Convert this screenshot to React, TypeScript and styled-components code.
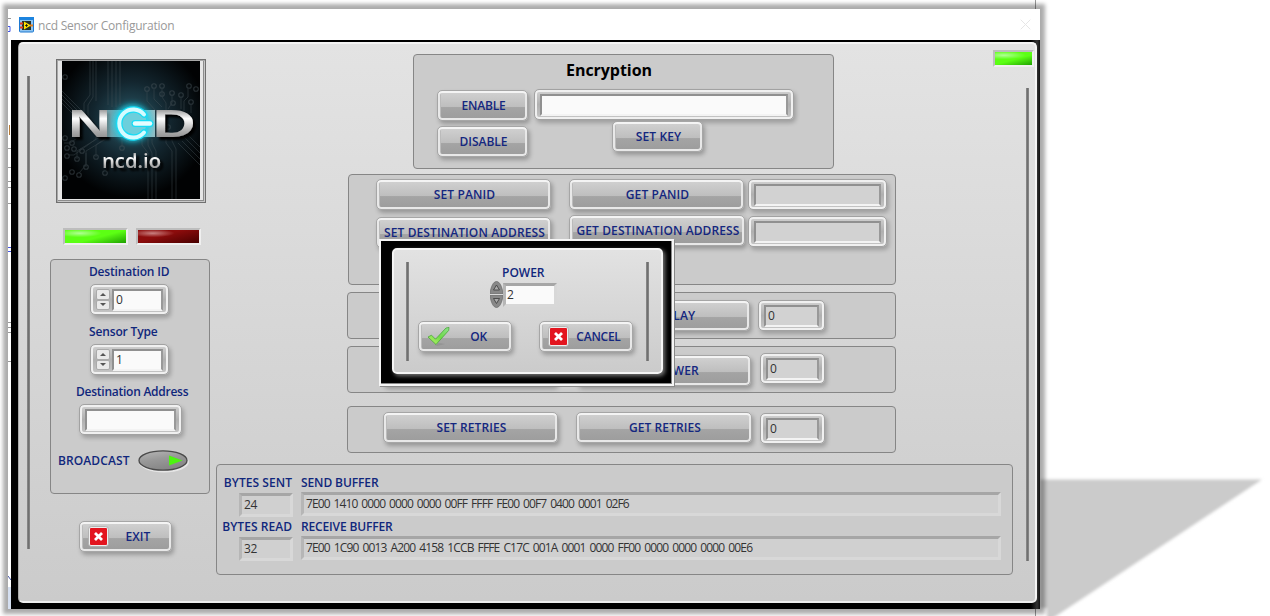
import React from "react";
import styled, { createGlobalStyle, css } from "styled-components";

const Global = createGlobalStyle`
  * { box-sizing: border-box; }
  html, body { margin: 0; padding: 0; background: #fff; overflow: hidden; }
  body { font-family: "Open Sans", "Noto Sans", sans-serif; font-size: 12px; }
`;

const Stage = styled.div`
  position: relative;
  width: 1270px;
  height: 616px;
  padding: 9px 0 0 8px;
  overflow: hidden;
  background: #fff;
`;

const CastShadow = styled.svg`
  position: absolute;
  left: 1030px;
  top: 0;
`;

const EdgeLines = styled.svg`
  position: absolute;
  left: 0;
  top: 0;
`;

const Shell = styled.div`
  position: relative;
  display: flex;
  width: 1032px;
  height: 600px;
  background: #fff;
  box-shadow: 0 0 4px 5px rgba(0, 0, 0, 0.33);
`;

const Window = styled.div`
  display: flex;
  flex-direction: column;
  width: 1029px;
`;

const TitleBar = styled.header`
  display: flex;
  align-items: center;
  height: 31px;
  padding: 0 9px 0 8px;
  background: #fff;
  color: #999;
  font-size: 12px;
`;

const Title = styled.span`
  flex: 1;
  margin: 2px 0 0 4px;
  letter-spacing: -0.22px;
`;

const Bezel = styled.main`
  height: 569px;
  padding: 2px 2px 6px 7px;
  background: linear-gradient(90deg, #000 0 1020px, #333 1026px, #111 1029px);
`;

const Face = styled.div`
  display: flex;
  width: 1019px;
  height: 561px;
  border: 2px solid #f4f4f4;
  border-left-color: #aaa;
  border-bottom-color: #eee;
  border-left-width: 1px;
  border-radius: 5px;
  background: linear-gradient(#e3e3e3, #cbcbcb);
`;

const Rail = styled.div<{ $h: number; $top?: number }>`
  flex: none;
  width: 3px;
  height: ${(p) => p.$h}px;
  margin-top: ${(p) => p.$top ?? 0}px;
  background: linear-gradient(90deg, #8f8f8f, #707070 50%, #8b8b8b);
`;

const SideColumn = styled.aside`
  display: flex;
  flex-direction: column;
  width: 160px;
  margin: 15px 0 0 20px;
`;

const LogoFrame = styled.div`
  width: 150px;
  height: 144px;
  margin-left: 6px;
  padding: 1px 5px 3px;
  border: 1px solid #707070;
  background: #e6e6e6;
  box-shadow: inset 1px 1px 0 #a8a8a8, inset -1px -1px 0 #c8c8c8, inset -2px -2px 0 #8c8c8c;
  svg { display: block; }
`;

const LedPair = styled.div`
  display: flex;
  gap: 8px;
  margin: 25px 0 0 13px;
`;

const Led = styled.div<{ $on: boolean; $w: number }>`
  width: ${(p) => p.$w}px;
  height: 17px;
  border: 2px solid;
  border-color: #bdbdbd #efefef #efefef #bdbdbd;
  background: ${(p) =>
    p.$on
      ? "radial-gradient(ellipse 22px 4px at 24% 25%, #b0ff95, transparent), linear-gradient(165deg, #5cff14 55%, #1ea000)"
      : "radial-gradient(ellipse 22px 4px at 24% 25%, #c98080, transparent), linear-gradient(165deg, #8c0c0c 40%, #480000)"};
`;

const group = css`
  border: 1px solid #868686;
  border-radius: 4px;
  background: #cbcbcb;
`;

const SettingsGroup = styled.section`
  ${group}
  display: flex;
  flex-direction: column;
  height: 235px;
  margin-top: 14px;
  padding-top: 4px;
`;

const Caption = styled.div<{ $left?: number; $top?: number; $ls?: number }>`
  height: 16px;
  margin-left: ${(p) => p.$left ?? 0}px;
  margin-top: ${(p) => p.$top ?? 0}px;
  color: #10277c;
  font-size: 12px;
  font-weight: 600;
  line-height: 16px;
  white-space: nowrap;
  letter-spacing: ${(p) => p.$ls ?? -0.25}px;
`;

const Framed = styled.div<{ $w: number; $left?: number; $top?: number }>`
  display: flex;
  flex: none;
  width: ${(p) => p.$w}px;
  height: 31px;
  margin-left: ${(p) => p.$left ?? 0}px;
  margin-top: ${(p) => p.$top ?? 0}px;
  padding: 4px 5px 3px;
  border: 1px solid #a2a2a2;
  border-radius: 5px;
  background: linear-gradient(#d2d2d2, #b0b0b0 50%, #c6c6c6);
  box-shadow: inset 0 0 0 2px #f0f0f0, 2px 3px 4px rgba(0, 0, 0, 0.22);
`;

const Well = styled.div<{ $readOnly?: boolean }>`
  flex: 1;
  border: 2px solid;
  border-color: #909090 #999 #f3f3f3 #909090;
  padding-left: 2px;
  background: ${(p) => (p.$readOnly ? "#d2d2d2" : "#fafafa")};
  color: #333;
  font-size: 12px;
  line-height: 17px;
`;

const Arrows = styled.div`
  display: flex;
  flex-direction: column;
  width: 14px;
  height: 21px;
  margin: 0 2px 0 0;
`;

const Arrow = styled.span<{ $down?: boolean }>`
  display: flex;
  flex: 1;
  align-items: center;
  justify-content: center;
  border: 1px solid #aaa;
  border-radius: 2px;
  background: #e9e9e9;
  &::after {
    content: "";
    border: 3px solid transparent;
    ${(p) => (p.$down ? "border-top-color: #555; border-bottom: 0;" : "border-bottom-color: #555; border-top: 0;")}
  }
`;

const BroadcastRow = styled.div`
  display: flex;
  align-items: center;
  margin: 14px 0 0 7px;
  gap: 8px;
`;

const Button = styled.button<{ $w: number; $ls?: number; $top?: number; $icon?: boolean }>`
  display: flex;
  flex: none;
  align-items: center;
  justify-content: center;
  width: ${(p) => p.$w}px;
  height: 31px;
  margin: ${(p) => p.$top ?? 0}px 0 0;
  padding: 0 0 1px 2px;
  border: 1px solid #a6a6a6;
  border-radius: 5px;
  background: linear-gradient(#d2d2d2, #bebebe 55%, #a4a4a4 57%, #9c9c9c);
  box-shadow: inset 0 2px 0 #f4f4f4, inset 0 0 0 2px #e8e8e8, inset 3px 0 0 #bbb, 2px 3px 4px rgba(0, 0, 0, 0.25);
  color: #14277f;
  font-family: inherit;
  font-size: 12px;
  font-weight: 600;
  letter-spacing: ${(p) => p.$ls ?? 0.1}px;
  white-space: nowrap;
  ${(p) =>
    p.$icon &&
    css`
      justify-content: flex-start;
      svg { flex: none; margin-left: 6px; }
      span { flex: 1; text-align: center; padding-right: 4px; }
    `}
`;

const ExitSlot = styled.div`
  margin: 27px 0 0 29px;
`;

const CenterColumn = styled.div`
  display: flex;
  flex-direction: column;
  width: 796px;
  margin: 10px 0 0 7px;
`;

const EncryptionGroup = styled.section`
  ${group}
  width: 421px;
  height: 115px;
  margin-left: 196px;
`;

const GroupTitle = styled.h1`
  height: 22px;
  margin: 4px 29px 8px 0;
  color: #000;
  font-size: 16px;
  font-weight: 700;
  line-height: 22px;
  text-align: center;
  letter-spacing: -0.05px;
`;

const EncryptionBody = styled.div`
  display: flex;
  gap: 6px;
  margin-left: 23px;
`;

const Stack = styled.div<{ $gap?: number; $top?: number }>`
  display: flex;
  flex-direction: column;
  gap: ${(p) => p.$gap ?? 0}px;
  padding-top: ${(p) => p.$top ?? 0}px;
`;

const KeySlot = styled.div`
  margin: 1px 0 0 78px;
`;

const PanGroup = styled.section`
  ${group}
  display: flex;
  width: 548px;
  height: 111px;
  margin: 5px 0 0 131px;
  padding: 4px 0 0 27px;
`;

const ParamGroup = styled.section<{ $top: number; $indent: number; $rowTop: number }>`
  ${group}
  display: flex;
  align-items: flex-start;
  width: 549px;
  height: 47px;
  margin: ${(p) => p.$top}px 0 0 130px;
  padding: ${(p) => p.$rowTop}px 0 0 ${(p) => p.$indent}px;
`;

const Spacer = styled.div<{ $w: number }>`
  width: ${(p) => p.$w}px;
`;

const BufferGroup = styled.section`
  ${group}
  display: flex;
  gap: 8px;
  width: 797px;
  height: 111px;
  margin: 11px 0 0 -1px;
  padding: 10px 0 0 6px;
`;

const CountColumn = styled.div`
  display: flex;
  flex-direction: column;
  align-items: flex-end;
  width: 70px;
`;

const CountCaption = styled(Caption)`
  margin-right: 1px;
`;

const Sunken = styled.div<{ $w: number; $top?: number; $white?: boolean; $ls?: number }>`
  flex: none;
  width: ${(p) => p.$w}px;
  height: 24px;
  margin-top: ${(p) => p.$top ?? 1}px;
  padding-left: ${(p) => (p.$white ? 1 : 2)}px;
  border: 3px solid;
  border-color: #a6a6a6 #d8d8d8 #d8d8d8 #b6b6b6;
  background: ${(p) => (p.$white ? "#fafafa" : "#d0d0d0")};
  color: #333;
  font-size: 12px;
  line-height: 18px;
  white-space: nowrap;
  letter-spacing: ${(p) => p.$ls ?? -0.3}px;
  word-spacing: ${(p) => (p.$ls ? 1.7 : 0)}px;
`;

const EndColumn = styled.div`
  display: flex;
  flex-direction: column;
  align-items: flex-end;
  width: 21px;
  padding-top: 6px;
`;

const RailSlot = styled.div`
  margin: 21px 5px 0 0;
`;

const Dialog = styled.div`
  position: absolute;
  left: 379px;
  top: 239px;
  width: 295px;
  height: 147px;
  padding: 7px 9px 10px 11px;
  border: 2px solid #f5f5f5;
  background: #000;
  box-shadow: inset -1px -1px 0 #888, 1px 1px 0 #888;
`;

const DialogFace = styled.div`
  display: flex;
  width: 271px;
  height: 126px;
  padding: 12px 11px 0 12px;
  border: 2px solid #f5f5f5;
  border-radius: 5px;
  background: linear-gradient(#e2e2e2, #cbcbcb);
  box-shadow: 2px 2px 4px #777;
`;

const DialogBody = styled.div`
  display: flex;
  flex-direction: column;
  width: 215px;
  margin: 0 13px 0 9px;
`;

const PowerRow = styled.div`
  display: flex;
  margin: 0 0 0 72px;
`;

const DialogButtons = styled.div`
  display: flex;
  justify-content: space-between;
  margin-top: 13px;
`;

const CrossIcon = () => (
  <svg width="21" height="21" viewBox="0 0 21 21">
    <rect x="0.5" y="0.5" width="20" height="20" rx="3" fill="#eee" stroke="#aaa" strokeWidth="0.8" />
    <rect x="2" y="2" width="17" height="17" rx="1" fill="#e3151f" />
    <path d="M7 7l7 7M14 7l-7 7" stroke="#fff" strokeWidth="2.8" />
  </svg>
);

const CheckIcon = () => (
  <svg width="23" height="20" viewBox="0 0 23 20">
    <defs>
      <linearGradient id="check" x1="0" y1="1" x2="1" y2="0">
        <stop offset="0" stopColor="#c4f56c" />
        <stop offset="0.5" stopColor="#6fdc48" />
        <stop offset="1" stopColor="#8fe08f" />
      </linearGradient>
    </defs>
    <path d="M8 19L12 17 18 18 10 20z" fill="#888" opacity="0.5" />
    <path d="M1 11l3.5-1.8 4 4L19 2l3-.6-.3 3L9 18.5z" fill="url(#check)" stroke="#4aa83a" strokeWidth="0.8" />
  </svg>
);

const AppIcon = () => (
  <svg width="15" height="16" viewBox="0 0 15 16">
    <rect x="0.5" y="0.5" width="14" height="14.5" rx="1" fill="#8fc4f0" stroke="#1d78d0" />
    <rect x="0" y="0" width="15" height="3" fill="#1d84df" />
    <rect x="3" y="4" width="9" height="9" fill="#24302a" />
    <path d="M5 4.5l7 4-7 4z" fill="#ffdf00" />
    <path d="M6 8.500h3M7.500 7v3" stroke="#111" strokeWidth="0.8" />
    <path d="M1 6.500h3M1 10.500h3" stroke="#e23a1c" strokeWidth="2" />
    <path d="M11 8.500h3" stroke="#e88018" strokeWidth="2" />
  </svg>
);

const CloseIcon = () => (
  <svg width="11" height="11" viewBox="0 0 11 11">
    <path d="M.7.700l9.600 9.600M10.300.700l-9.600 9.600" stroke="#e6e6e6" strokeWidth="1" />
  </svg>
);

const traces = [
  "M28 0V34L22 42V60", "M31 0V36L26 44V62", "M34 0V40", "M46 0V44", "M50 0V46", "M54 0V46", "M58 0V44",
  "M0 34L22 56", "M0 38L20 58", "M0 42L18 60", "M0 30L24 54",
  "M85 30V40L94 50", "M92 28V38L100 46", "M100 28V36L104 42V50", "M110 34V42L106 48", "M119 36V48", "M126 28V36L122 40V50", "M129 43V52",
  "M86 138V92L80 84V78", "M90 138V92L86 84V78", "M94 138V90L90 82V78", "M110 138V90L104 82V78", "M114 138V88L110 80V78",
  "M138 104L116 82", "M138 98L120 80", "M138 92L122 76", "M138 86L124 72",
  "M2 82H8L20 74", "M6 94H12L34 78V72", "M15 98V90L38 76", "M17 112L24 104V90L44 78", "M24 106V92", "M34 96V84L48 74", "M60 86V76",
];
const pads = [
  [3, 16], [85, 28], [92, 25], [100, 25], [100, 33], [110, 32], [119, 34], [127, 25], [134, 28], [129, 41], [111, 42], [106, 66], [106, 74],
  [3, 77], [5, 87], [10, 82], [12, 88], [5, 95], [15, 98], [20, 90], [10, 111], [17, 114], [24, 106], [34, 96], [60, 87], [3, 117], [43, 112],
];

const Logo = () => (
  <svg width="138" height="138" viewBox="0 0 138 138">
    <defs>
      <radialGradient id="halo" cx="0.5" cy="0.43" r="0.56">
        <stop offset="0" stopColor="#2b5b6a" />
        <stop offset="0.5" stopColor="#13262f" />
        <stop offset="1" stopColor="#010203" />
      </radialGradient>
      <linearGradient id="metal" x1="0" y1="0" x2="0" y2="1">
        <stop offset="0.15" stopColor="#888" />
        <stop offset="0.4" stopColor="#fff" />
        <stop offset="0.7" stopColor="#aaa" />
        <stop offset="1" stopColor="#777" />
      </linearGradient>
      <linearGradient id="bar" x1="0" x2="1" y1="0" y2="0">
        <stop offset="0" stopColor="#a8dfe8" stopOpacity="0.7" />
        <stop offset="0.5" stopColor="#3fd4e8" />
        <stop offset="1" stopColor="#b8e4ea" stopOpacity="0.9" />
      </linearGradient>
      <filter id="glow" x="-50%" y="-50%" width="200%" height="200%">
        <feGaussianBlur stdDeviation="3" />
      </filter>
      <filter id="drop" x="-10%" y="-10%" width="120%" height="140%">
        <feDropShadow dx="3" dy="3" stdDeviation="0.8" floodColor="#000" floodOpacity="1" />
      </filter>
    </defs>
    <rect width="138" height="138" fill="url(#halo)" />
    <g fill="none" stroke="#4a555b" strokeWidth="0.8" opacity="0.5">
      {traces.map((d) => <path key={d} d={d} />)}
      {pads.map(([x, y]) => <circle key={`${x}-${y}`} cx={x} cy={y} r="2.3" strokeWidth="1.1" />)}
    </g>
    <g fontFamily="Liberation Sans, sans-serif" fontWeight="700" fontSize="39" fill="url(#metal)" filter="url(#drop)">
      <text x="6" y="75.500" textLength="43" lengthAdjust="spacingAndGlyphs">N</text>
      <text x="90.500" y="75.500" textLength="43" lengthAdjust="spacingAndGlyphs">D</text>
    </g>
    <rect x="45" y="49" width="48" height="27" fill="url(#bar)" opacity="0.85" />
    <circle cx="70.500" cy="62" r="18" fill="#16d8f2" filter="url(#glow)" />
    <circle cx="70.500" cy="62" r="14" fill="#6ccfdc" />
    <g fill="none" strokeLinecap="round">
      <path d="M82 53.500A14 14 0 1 0 82 71.500" stroke="#17dcf5" strokeWidth="6.500" />
      <path d="M73 62.500H88" stroke="#17dcf5" strokeWidth="7" />
      <path d="M82 53.500A14 14 0 1 0 82 71.500" stroke="#d5fbff" strokeWidth="4" />
      <path d="M73 62.500H88" stroke="#e4fdff" strokeWidth="4.500" />
    </g>
    <text
      x="40"
      y="107"
      textLength="59"
      lengthAdjust="spacingAndGlyphs"
      fill="url(#metal)"
      fontFamily="Open Sans, sans-serif"
      fontWeight="600"
      fontSize="20"
      filter="url(#drop)"
    >
      ncd.io
    </text>
  </svg>
);

const OvalSwitch = () => (
  <svg width="54" height="24" viewBox="0 0 54 24">
    <defs>
      <linearGradient id="oval" x1="0" y1="0" x2="0.4" y2="1">
        <stop offset="0" stopColor="#b8b8b8" />
        <stop offset="0.5" stopColor="#999" />
        <stop offset="1" stopColor="#868686" />
      </linearGradient>
    </defs>
    <ellipse cx="26" cy="13" rx="25" ry="10.500" fill="#e6e6e6" />
    <ellipse cx="25" cy="11.500" rx="24" ry="9.700" fill="url(#oval)" stroke="#4a4a4a" strokeWidth="1.300" />
    <path d="M31 6.500l13.500 5-13.500 5z" fill="#4df410" />
  </svg>
);

const OvalSpinner = () => (
  <svg width="13" height="27" viewBox="0 0 13 27">
    <path d="M0 12.500C1 5 3.500.5 6.500.5S12 5 13 12.500z" fill="#888" stroke="#666" strokeWidth="0.700" />
    <path d="M0 14.500C1 22 3.500 26.500 6.500 26.500S12 22 13 14.500z" fill="#888" stroke="#666" strokeWidth="0.700" />
    <path d="M3.500 9L6.500 4l3 5z" fill="#aaa" stroke="#444" strokeWidth="0.900" />
    <path d="M3.500 17.500L6.500 22.500l3-5z" fill="#aaa" stroke="#444" strokeWidth="0.900" />
  </svg>
);

const NumberField = ({ value }: { value: string }) => (
  <Framed $w={79} $left={39} $top={4}>
    <Arrows>
      <Arrow />
      <Arrow $down />
    </Arrows>
    <Well>{value}</Well>
  </Framed>
);

export default function App() {
  return (
    <Stage>
      <Global />
      <CastShadow width="240" height="616" viewBox="0 0 240 616">
        <defs>
          <filter id="soft">
            <feGaussianBlur stdDeviation="1.500" />
          </filter>
        </defs>
        <path d="M10 479.500H232L17 622V608H10z" fill="#cbcbcb" filter="url(#soft)" />
        <path d="M5.500 0V9M5.500 609V616" stroke="#999" />
      </CastShadow>
      <Shell>
        <EdgeLines width="3" height="600" viewBox="0 0 3 600">
          <path d="M0 9.500h3M0 139.500h3M0 158.500h3M0 172.500h3M0 178.500h3M0 194.500h3M0 313.500h3M0 318.500h3M0 323.500h3M0 352.500h3" stroke="#999" />
          <path d="M0 17.500h2v5h-2M0 238.500h3M0 242.500h3" fill="none" stroke="#4254e8" />
          <path d="M1 116h1v10h-1z" fill="#b77b38" />
          <path d="M0 567l3 4" stroke="#4254a8" />
          <rect y="578" width="3" height="22" fill="#d5dff0" />
        </EdgeLines>
        <Spacer $w={3} />
        <Window>
          <TitleBar>
            <AppIcon />
            <Title>ncd Sensor Configuration</Title>
            <CloseIcon />
          </TitleBar>
          <Bezel>
            <Face>
              <Spacer $w={8} />
              <Rail $h={473} $top={32} />
              <SideColumn>
                <LogoFrame>
                  <Logo />
                </LogoFrame>
                <LedPair>
                  <Led $on $w={65} />
                  <Led $on={false} $w={65} />
                </LedPair>
                <SettingsGroup>
                  <Caption $left={38} $ls={-0.18}>Destination ID</Caption>
                  <NumberField value="0" />
                  <Caption $left={38} $top={9} $ls={-0.15}>Sensor Type</Caption>
                  <NumberField value="1" />
                  <Caption $left={25} $top={9}>Destination Address</Caption>
                  <Framed $w={103} $left={28} $top={4}>
                    <Well />
                  </Framed>
                  <BroadcastRow>
                    <Caption $ls={0.1}>BROADCAST</Caption>
                    <OvalSwitch />
                  </BroadcastRow>
                </SettingsGroup>
                <ExitSlot>
                  <Button $w={93} $icon>
                    <CrossIcon />
                    <span>EXIT</span>
                  </Button>
                </ExitSlot>
              </SideColumn>
              <CenterColumn>
                <EncryptionGroup>
                  <GroupTitle>Encryption</GroupTitle>
                  <EncryptionBody>
                    <Stack $gap={5} $top={1}>
                      <Button $w={91} $ls={-0.2}>ENABLE</Button>
                      <Button $w={91} $ls={-0.05}>DISABLE</Button>
                    </Stack>
                    <Stack>
                      <Framed $w={260}>
                        <Well />
                      </Framed>
                      <KeySlot>
                        <Button $w={91}>SET KEY</Button>
                      </KeySlot>
                    </Stack>
                  </EncryptionBody>
                </EncryptionGroup>
                <PanGroup>
                  <Stack $gap={7}>
                    <Button $w={175}>SET PANID</Button>
                    <Button $w={175}>SET DESTINATION ADDRESS</Button>
                  </Stack>
                  <Spacer $w={18} />
                  <Stack $gap={5}>
                    <Button $w={175}>GET PANID</Button>
                    <Button $w={176}>GET DESTINATION ADDRESS</Button>
                  </Stack>
                  <Spacer $w={3} />
                  <Stack $gap={6}>
                    <Framed $w={139}>
                      <Well $readOnly />
                    </Framed>
                    <Framed $w={139}>
                      <Well $readOnly />
                    </Framed>
                  </Stack>
                </PanGroup>
                <ParamGroup $top={7} $indent={34} $rowTop={7}>
                  <Button $w={175}>SET DELAY</Button>
                  <Spacer $w={18} />
                  <Button $w={175}>GET DELAY</Button>
                  <Spacer $w={8} />
                  <Framed $w={67}>
                    <Well $readOnly>0</Well>
                  </Framed>
                </ParamGroup>
                <ParamGroup $top={7} $indent={34} $rowTop={6}>
                  <Button $w={175} $top={2}>SET POWER</Button>
                  <Spacer $w={19} />
                  <Button $w={175} $top={2}>GET POWER</Button>
                  <Spacer $w={9} />
                  <Framed $w={65}>
                    <Well $readOnly>0</Well>
                  </Framed>
                </ParamGroup>
                <ParamGroup $top={13} $indent={35} $rowTop={5}>
                  <Button $w={175}>SET RETRIES</Button>
                  <Spacer $w={18} />
                  <Button $w={176}>GET RETRIES</Button>
                  <Spacer $w={8} />
                  <Framed $w={65} $top={1}>
                    <Well $readOnly>0</Well>
                  </Framed>
                </ParamGroup>
                <BufferGroup>
                  <CountColumn>
                    <CountCaption $ls={0.05}>BYTES SENT</CountCaption>
                    <Sunken $w={54} $top={2}>24</Sunken>
                    <CountCaption $ls={0.05} $top={2}>BYTES READ</CountCaption>
                    <Sunken $w={54} $top={2}>32</Sunken>
                  </CountColumn>
                  <Stack>
                    <Caption $ls={-0.1}>SEND BUFFER</Caption>
                    <Sunken $w={700} $ls={-0.9}>7E00 1410 0000 0000 0000 00FF FFFF FE00 00F7 0400 0001 02F6</Sunken>
                    <Caption $ls={-0.15} $top={3}>RECEIVE BUFFER</Caption>
                    <Sunken $w={700} $ls={-0.85}>7E00 1C90 0013 A200 4158 1CCB FFFE C17C 001A 0001 0000 FF00 0000 0000 0000 00E6</Sunken>
                  </Stack>
                </BufferGroup>
              </CenterColumn>
              <EndColumn>
                <Led $on $w={41} />
                <RailSlot>
                  <Rail $h={473} />
                </RailSlot>
              </EndColumn>
            </Face>
          </Bezel>
        </Window>
      </Shell>
      <Dialog>
        <DialogFace>
          <Rail $h={99} />
          <DialogBody>
            <Caption $left={84} $top={3} $ls={0}>POWER</Caption>
            <PowerRow>
              <OvalSpinner />
              <Sunken $w={54} $top={2} $white>2</Sunken>
            </PowerRow>
            <DialogButtons>
              <Button $w={94} $icon $ls={-0.25}>
                <CheckIcon />
                <span>OK</span>
              </Button>
              <Button $w={94} $icon $ls={-0.25}>
                <CrossIcon />
                <span>CANCEL</span>
              </Button>
            </DialogButtons>
          </DialogBody>
          <Rail $h={99} />
        </DialogFace>
      </Dialog>
    </Stage>
  );
}
